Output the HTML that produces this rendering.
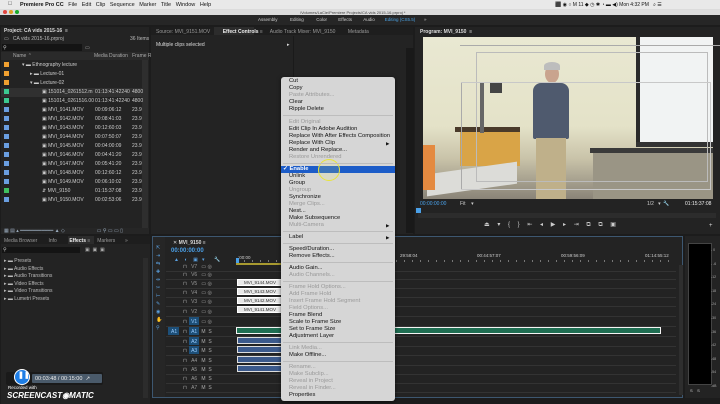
<!DOCTYPE html>
<html><head><meta charset="utf-8"><style>
*{margin:0;padding:0;box-sizing:border-box}
body{width:720px;height:404px;overflow:hidden;background:#1c1c1c;font-family:"Liberation Sans",sans-serif;position:relative;color:#bbb}
.a{position:absolute}
.t{position:absolute;font-size:5px;white-space:nowrap;line-height:6px}
.m{position:absolute;left:289px;font-size:5.8px;color:#111;white-space:nowrap;line-height:7px}
.d{color:#999}
.sep{position:absolute;left:283px;width:110px;height:1px;background:#bdbdbd}
</style></head><body>
<div class="a" style="left:0;top:0;width:720px;height:9px;background:#e9e9e9"></div>
<div class="t" style="left:8px;top:1px;font-size:5.5px;color:#111">&#63743;</div>
<div class="t" style="left:20px;top:1.5px;font-size:5.5px;color:#111"><b>Premiere Pro CC</b>&nbsp;&nbsp;&nbsp;File&nbsp;&nbsp;&nbsp;Edit&nbsp;&nbsp;&nbsp;Clip&nbsp;&nbsp;&nbsp;Sequence&nbsp;&nbsp;&nbsp;Marker&nbsp;&nbsp;&nbsp;Title&nbsp;&nbsp;&nbsp;Window&nbsp;&nbsp;&nbsp;Help</div>
<div class="t" style="left:555px;top:1.5px;font-size:5px;color:#111">⬛ ◉ ○ M 11 ◆ ◷ ✱ ◔ ▬ ◀) Mon 4:32 PM&nbsp;&nbsp;&nbsp;⌕ ☰</div>
<div class="a" style="left:0;top:9px;width:720px;height:6px;background:#dcdcdc"></div>
<div class="a" style="left:3px;top:10px;width:4px;height:4px;border-radius:50%;background:#e0443e"></div>
<div class="a" style="left:9px;top:10px;width:4px;height:4px;border-radius:50%;background:#dea123"></div>
<div class="a" style="left:15px;top:10px;width:4px;height:4px;border-radius:50%;background:#1aab29"></div>
<div class="t" style="left:300px;top:9.5px;font-size:4px;color:#444">/Volumes/LaCie/Premiere Projects/CA vids 2015-16.prproj *</div>
<div class="a" style="left:0;top:15px;width:720px;height:10px;background:#262626"></div>
<div class="t" style="left:258px;top:17px;font-size:4.5px;color:#ccc">Assembly&nbsp;&nbsp;&nbsp;&nbsp;&nbsp;&nbsp;&nbsp;&nbsp;&nbsp;&nbsp;Editing&nbsp;&nbsp;&nbsp;&nbsp;&nbsp;&nbsp;&nbsp;&nbsp;&nbsp;&nbsp;Color&nbsp;&nbsp;&nbsp;&nbsp;&nbsp;&nbsp;&nbsp;&nbsp;&nbsp;Effects&nbsp;&nbsp;&nbsp;&nbsp;&nbsp;&nbsp;&nbsp;&nbsp;&nbsp;Audio&nbsp;&nbsp;&nbsp;&nbsp;&nbsp;&nbsp;&nbsp;&nbsp;<span style="color:#4aa0e0">Editing (CS5.5)</span>&nbsp;&nbsp;&nbsp;&nbsp;&nbsp;&nbsp;&nbsp;»</div>

<div class="a" style="left:1px;top:27px;width:148px;height:207px;background:#232323"></div>
<div class="t" style="left:4px;top:28px;color:#ddd"><b>Project: CA vids 2015-16</b> &nbsp;≡</div>
<div class="t" style="left:4px;top:36px;color:#bbb">▭&nbsp;&nbsp; CA vids 2015-16.prproj</div>
<div class="t" style="left:130px;top:36px;color:#bbb">36 Items</div>
<div class="a" style="left:2px;top:44px;width:80px;height:7px;background:#141414"></div>
<div class="t" style="left:3px;top:45px;color:#ccc">⚲</div>
<div class="t" style="left:85px;top:45px;color:#aaa">▭</div>
<div class="a" style="left:1px;top:52px;width:148px;height:8px;background:#2a2a2a"></div>
<div class="t" style="left:13px;top:53px;color:#aaa">Name ⌃</div>
<div class="t" style="left:94px;top:53px;color:#aaa">Media Duration&nbsp;&nbsp;&nbsp;Frame R</div>
<div class="a" style="left:142px;top:60px;width:6px;height:168px;background:#2e2e2e"></div>
<div id="proj"></div>
<div class="a" style="left:1px;top:228px;width:148px;height:6px;background:#262626"></div>
<div class="t" style="left:4px;top:228px;color:#9ab">▦ ▤ ▴ ━━━━━━━━━━━ ▲ ◇&nbsp;&nbsp;&nbsp;&nbsp;&nbsp;&nbsp;&nbsp;&nbsp;&nbsp;&nbsp;&nbsp;&nbsp;&nbsp;&nbsp;&nbsp;&nbsp;&nbsp;&nbsp;&nbsp;&nbsp;&nbsp;&nbsp;&nbsp;▭ ⚲ ▭ ▭ ▯</div>

<div class="a" style="left:151px;top:27px;width:262px;height:207px;background:#232323"></div>
<div class="a" style="left:151px;top:27px;width:262px;height:8px;background:#1e1e1e"></div>
<div class="a" style="left:214px;top:27px;width:40px;height:8px;background:#2c2c2c"></div>
<div class="t" style="left:156px;top:28.5px;color:#999">Source: MVI_9151.MOV&nbsp;&nbsp;&nbsp;&nbsp;&nbsp;&nbsp;&nbsp;&nbsp;&nbsp;<b style="color:#eee">Effect Controls</b> ≡&nbsp;&nbsp;&nbsp;&nbsp;&nbsp;Audio Track Mixer: MVI_9150&nbsp;&nbsp;&nbsp;&nbsp;&nbsp;&nbsp;&nbsp;&nbsp;&nbsp;Metadata</div>
<div class="t" style="left:156px;top:42px;color:#ddd">Multiple clips selected</div>
<div class="t" style="left:287px;top:42px;color:#ddd">▸</div>
<div class="a" style="left:293px;top:36px;width:1px;height:198px;background:#1a1a1a"></div>

<div class="a" style="left:415px;top:27px;width:305px;height:207px;background:#232323"></div>
<div class="a" style="left:406px;top:48px;width:8px;height:185px;background:#191919"></div>
<div class="t" style="left:420px;top:28.5px;color:#ddd"><b>Program: MVI_9150</b> &nbsp;≡</div>
<div class="a" style="left:423px;top:37px;width:290px;height:162px;background:linear-gradient(180deg,#e9e8d2 0%,#e4e2c8 55%,#c9c3a9 75%,#8a8478 100%)"></div>
<div class="a" style="left:636px;top:37px;width:77px;height:105px;background:#f1f3f3"></div>
<div class="a" style="left:636px;top:37px;width:4px;height:108px;background:#2a2a2a"></div>
<div class="a" style="left:636px;top:142px;width:77px;height:5px;background:#333"></div>
<div class="a" style="left:593px;top:150px;width:120px;height:49px;background:#9a9585"></div>
<div class="a" style="left:590px;top:148px;width:123px;height:5px;background:#3a3a3a"></div>
<div class="a" style="left:460px;top:130px;width:60px;height:36px;background:#d9a447"></div>
<div class="a" style="left:455px;top:127px;width:65px;height:5px;background:#4a3a2a"></div>
<div class="a" style="left:427px;top:168px;width:90px;height:22px;background:#dcdcd8;transform:skewY(-8deg)"></div>
<div class="a" style="left:423px;top:145px;width:12px;height:45px;background:#e48a40"></div>
<div class="a" style="left:480px;top:83px;width:4px;height:50px;background:#666"></div>
<div class="a" style="left:490px;top:83px;width:12px;height:10px;background:#444"></div>
<div class="a" style="left:545px;top:65px;width:14px;height:18px;border-radius:50%;background:#c9a48e"></div>
<div class="a" style="left:544px;top:62px;width:16px;height:8px;border-radius:50% 50% 0 0;background:#bdbdbd"></div>
<div class="a" style="left:533px;top:83px;width:36px;height:56px;border-radius:8px 8px 2px 2px;background:#4f5a6e"></div>
<div class="a" style="left:536px;top:138px;width:30px;height:61px;background:#bfb08a"></div>
<div class="a" style="left:460px;top:45px;width:270px;height:1px;background:#aaa"></div>
<div class="a" style="left:461px;top:82px;width:1px;height:108px;background:#aaa"></div>
<div class="a" style="left:476px;top:52px;width:232px;height:130px;border:1px solid #bbb"></div>
<div class="a" style="left:461px;top:82px;width:250px;height:108px;border:1px solid #c8c8c8;border-left:none"></div>
<div class="a" style="left:423px;top:199px;width:297px;height:35px;background:#232323"></div>
<div class="t" style="left:420px;top:200.5px;color:#4aa0e8;font-size:5px">00:00:00:00</div>
<div class="t" style="left:460px;top:200.5px;color:#ccc">Fit&nbsp;&nbsp;&nbsp;&nbsp;▾</div>
<div class="t" style="left:647px;top:200.5px;color:#ccc">1/2&nbsp;&nbsp;&nbsp;▾&nbsp;&nbsp;🔧</div>
<div class="t" style="left:685px;top:200.5px;color:#eee;font-size:5px">01:15:37:08</div>
<div class="a" style="left:416px;top:208px;width:5px;height:5px;background:#4aa0e8"></div>
<div class="a" style="left:418px;top:213px;width:298px;height:5px;background:#2c2c2c"></div>
<div class="t" style="left:484px;top:222px;color:#ccc;font-size:6px;letter-spacing:3px">⏏ ▾ { } ⇤ ◂ ▶ ▸ ⇥ ⧉ ⧉ ▣</div>
<div class="t" style="left:709px;top:223px;color:#ddd;font-size:6px">+</div>

<div class="a" style="left:1px;top:236px;width:149px;height:168px;background:#232323"></div>
<div class="a" style="left:1px;top:236px;width:149px;height:8px;background:#1e1e1e"></div>
<div class="a" style="left:68px;top:236px;width:26px;height:8px;background:#2c2c2c"></div>
<div class="t" style="left:4px;top:237.5px;color:#999">Media Browser&nbsp;&nbsp;&nbsp;&nbsp;&nbsp;&nbsp;&nbsp;&nbsp;Info&nbsp;&nbsp;&nbsp;&nbsp;&nbsp;&nbsp;&nbsp;&nbsp;&nbsp;<b style="color:#eee">Effects</b> ≡&nbsp;&nbsp;&nbsp;&nbsp;&nbsp;Markers&nbsp;&nbsp;&nbsp;&nbsp;&nbsp;&nbsp;&nbsp;»</div>
<div class="a" style="left:2px;top:247px;width:78px;height:6px;background:#141414"></div>
<div class="t" style="left:3px;top:247px;color:#ccc">⚲</div>
<div class="t" style="left:85px;top:247px;color:#aaa">▣&nbsp;&nbsp;▣&nbsp;&nbsp;▣</div>
<div class="t" style="left:4px;top:258px;color:#bbb;line-height:7.5px">▸ ▬ Presets<br>▸ ▬ Audio Effects<br>▸ ▬ Audio Transitions<br>▸ ▬ Video Effects<br>▸ ▬ Video Transitions<br>▸ ▬ Lumetri Presets</div>
<div class="a" style="left:143px;top:258px;width:5px;height:140px;background:#2c2c2c"></div>
<div class="a" style="left:6px;top:372px;width:97px;height:13px;background:#1a1a1a;border-radius:2px"></div>
<div class="a" style="left:32px;top:374px;width:70px;height:9px;background:#4a5a6a;border-radius:1px"></div>
<div class="t" style="left:35px;top:375.5px;color:#eee;font-size:5.5px">00:03:48 / 00:15:00&nbsp;&nbsp;↗</div>
<div class="a" style="left:14px;top:369px;width:16px;height:16px;border-radius:50%;background:#1e7ee6;border:1px solid #fff"></div>
<div class="t" style="left:18px;top:373px;color:#fff;font-size:7px"><b>❚❚</b></div>
<div class="t" style="left:8px;top:385px;color:#fff;font-size:4.5px">Recorded with</div>
<div class="t" style="left:7px;top:391px;color:#fff;font-size:8px;line-height:9px;font-style:italic"><b>SCREENCAST◉MATIC</b></div>

<div class="a" style="left:152px;top:236px;width:531px;height:162px;background:#232323;border:1px solid #3d5770"></div>
<div class="a" style="left:153px;top:237px;width:12px;height:160px;background:#262626"></div>
<div class="t" style="left:156px;top:244px;color:#5aa0e0;font-size:5px;line-height:8px">⇱<br>⇥<br>⇆<br>✚<br>⇹<br>✂<br>⊢<br>✎<br>◉<br>✋<br>⚲</div>
<div class="t" style="left:173px;top:240px;color:#ddd">✕ <b>MVI_9150</b> ≡</div>
<div class="t" style="left:171px;top:248px;color:#4aa0e8;font-size:6px"><b>00:00:00:00</b></div>
<div class="t" style="left:174px;top:257px;color:#5aa0e0">▲&nbsp;&nbsp;&nbsp;&nbsp;◐&nbsp;&nbsp;&nbsp;&nbsp;▣&nbsp;&nbsp;&nbsp;▾&nbsp;&nbsp;&nbsp;&nbsp;&nbsp;&nbsp;&nbsp;🔧</div>
<div class="t" style="left:238px;top:255px;color:#ccc;font-size:4.5px">:00:00</div>
<div class="t" style="left:400px;top:253px;color:#ccc;font-size:4.5px">29:58:04</div>
<div class="t" style="left:477px;top:253px;color:#ccc;font-size:4.5px">00:44:57:07</div>
<div class="t" style="left:561px;top:253px;color:#ccc;font-size:4.5px">00:59:56:09</div>
<div class="t" style="left:645px;top:253px;color:#ccc;font-size:4.5px">01:14:55:12</div>
<div class="a" style="left:236px;top:260px;width:440px;height:2px;background:repeating-linear-gradient(90deg,#777 0 1px,transparent 1px 8px)"></div>
<div class="a" style="left:236px;top:263px;width:60px;height:1.5px;background:#a89a30"></div>
<div class="a" style="left:236px;top:258px;width:3px;height:5px;background:#4aa0e8"></div>
<div class="a" style="left:679px;top:265px;width:4px;height:130px;background:#2e2e2e"></div>
<div id="tl"></div>
<div class="a" style="left:236px;top:327px;width:425px;height:7px;background:#1f6e52;border:1px solid #f4f4f4"></div>

<div class="a" style="left:685px;top:236px;width:35px;height:162px;background:#232323"></div>
<div class="a" style="left:688px;top:243px;width:24px;height:142px;background:#000;border:1px solid #444"></div>
<div class="t" style="left:711px;top:244px;color:#aaa;font-size:3.5px;line-height:13.6px">- 0<br>- -6<br>-12<br>-18<br>-24<br>-30<br>-36<br>-42<br>-48<br>-54<br>-dB</div>
<div class="t" style="left:690px;top:388px;color:#ccc;font-size:4px">S&nbsp;&nbsp;&nbsp;&nbsp;S</div>

<div class="a" style="left:281px;top:77px;width:114px;height:324px;background:#d6d6d6;border-radius:3px;box-shadow:0 1px 4px rgba(0,0,0,.6)"></div>
<div class="a" style="left:281px;top:166px;width:114px;height:7px;background:#1c5cc8"></div>
<div class="a" style="left:318px;top:159px;width:22px;height:22px;border-radius:50%;border:1.5px solid #e8e43a;background:rgba(240,240,100,.15)"></div>
<div id="menu"></div>
<script>
var items=[["Cut",81],["Copy",88],["Paste Attributes...",95,1],["Clear",102],["Ripple Delete",109],["-",115],["Edit Original",122,1],["Edit Clip In Adobe Audition",129],["Replace With After Effects Composition",136],["Replace With Clip",143,0,1],["Render and Replace...",150],["Restore Unrendered",157,1],["-",163],["Unlink",176],["Group",183],["Ungroup",190,1],["Synchronize",197],["Merge Clips...",204,1],["Nest...",211],["Make Subsequence",218],["Multi-Camera",225,1,1],["-",231],["Label",237,0,1],["-",243],["Speed/Duration...",249],["Remove Effects...",256],["-",262],["Audio Gain...",268],["Audio Channels...",275,1],["-",281],["Frame Hold Options...",287,1],["Add Frame Hold",294,1],["Insert Frame Hold Segment",301,1],["Field Options...",308,1],["Frame Blend",315],["Scale to Frame Size",322],["Set to Frame Size",329],["Adjustment Layer",336],["-",342],["Link Media...",348,1],["Make Offline...",355],["-",361],["Rename...",367,1],["Make Subclip...",374,1],["Reveal in Project",381,1],["Reveal in Finder...",388,1],["Properties",395]];
var h="";items.forEach(function(i){if(i[0]=="-"){h+='<div class="sep" style="top:'+i[1]+'px"></div>';return;}
h+='<div class="m'+(i[2]?' d':'')+'" style="top:'+(i[1]-3.5)+'px">'+i[0]+'</div>';if(i[3])h+='<div class="m" style="left:386px;top:'+(i[1]-3.5)+'px;font-size:4.5px">▶</div>';});
h+='<div class="m" style="left:283px;top:166px;color:#fff"><b>✓ Enable</b></div>';
document.getElementById("menu").innerHTML=h;
var p=[["#f0a030","▾ ▬ Ethnography lecture",10,"",""],["#f0a030","▸ ▬ Lecture-01",18,"",""],["#f0a030","▾ ▬ Lecture-02",18,"",""],["#3cc890","▣ 151014_0261512.m",30,"01:13:41:42240","4800"],["#3cc890","▣ 151014_0261516.00",30,"01:13:41:42240","4800"]];
var names=["9141","9142","9143","9144","9145","9146","9147","9148","9149"],durs=["00:09:06:12","00:08:41:03","00:12:60:03","00:07:50:07","00:04:00:09","00:04:41:20","00:05:41:20","00:12:60:12","00:06:10:02"];
names.forEach(function(n,i){p.push(["#6a9ee0","▣ MVI_"+n+".MOV",30,durs[i],"23.9"]);});
p.push(["#40c060","⇵ MVI_9150",30,"01:15:37:08","23.9"]);p.push(["#6a9ee0","▣ MVI_9150.MOV",30,"00:02:53:06","23.9"]);
h="";p.forEach(function(r,i){var y=62+i*9;if(i==3)h+='<div class="a" style="left:1px;top:'+(y-1)+'px;width:141px;height:9px;background:#303030"></div>';
h+='<div class="a" style="left:4px;top:'+y+'px;width:5px;height:5px;background:'+r[0]+'"></div>';
h+='<div class="t" style="left:'+(12+r[2])+'px;top:'+y+'px;color:#ccc">'+r[1]+'</div>';
h+='<div class="t" style="left:95px;top:'+y+'px;color:#ccc">'+r[3]+'</div><div class="t" style="left:132px;top:'+y+'px;color:#ccc">'+r[4]+'</div>';});
document.getElementById("proj").innerHTML=h;
var tr=[["V7",265],["V6",273],["V5",282],["V4",291],["V3",300],["V2",310],["V1",320],["A1",330],["A2",340],["A3",349],["A4",359],["A5",368],["A6",377],["A7",386]];
h="";tr.forEach(function(t,i){var y=t[1]-3;var hl=(t[0]=="V1"||t[0]=="A2"||t[0]=="A3"||t[0]=="A1");
h+='<div class="a" style="left:166px;top:'+(y+8.5)+'px;width:510px;height:0.5px;background:#333"></div>';
if(t[0]=="A1")h+='<div class="a" style="left:168px;top:'+y+'px;width:11px;height:8px;background:#1d4f78"></div><div class="t" style="left:171px;top:'+(y+1.5)+'px;color:#9cf">A1</div>';
if(hl)h+='<div class="a" style="left:189px;top:'+y+'px;width:10px;height:8px;background:#1d4f78"></div>';
h+='<div class="t" style="left:183px;top:'+(y+1.5)+'px;color:#aaa">⊓&nbsp;&nbsp;&nbsp;<span style="color:'+(hl?'#9cf':'#999')+'">'+t[0]+'</span>&nbsp;&nbsp;&nbsp;'+(t[0][0]=="V"?'▭ ◎':'M&nbsp; S')+'</div>';});
[["MVI_9144.MOV",282],["MVI_9143.MOV",291],["MVI_9142.MOV",300],["MVI_9141.MOV",309]].forEach(function(c){h+='<div class="a" style="left:237px;top:'+(c[1]-3)+'px;width:46px;height:7px;background:#e8e8e8;border:1px solid #fff"></div><div class="t" style="left:244px;top:'+(c[1]-2)+'px;color:#333;font-size:4.5px">'+c[0]+'</div>';});
[340,349,359,368].forEach(function(y){h+='<div class="a" style="left:237px;top:'+(y-3)+'px;width:46px;height:7px;background:#3c5a8c;border:1px solid #ddd"></div>';});
document.getElementById("tl").innerHTML=h;
</script>
</body></html>
